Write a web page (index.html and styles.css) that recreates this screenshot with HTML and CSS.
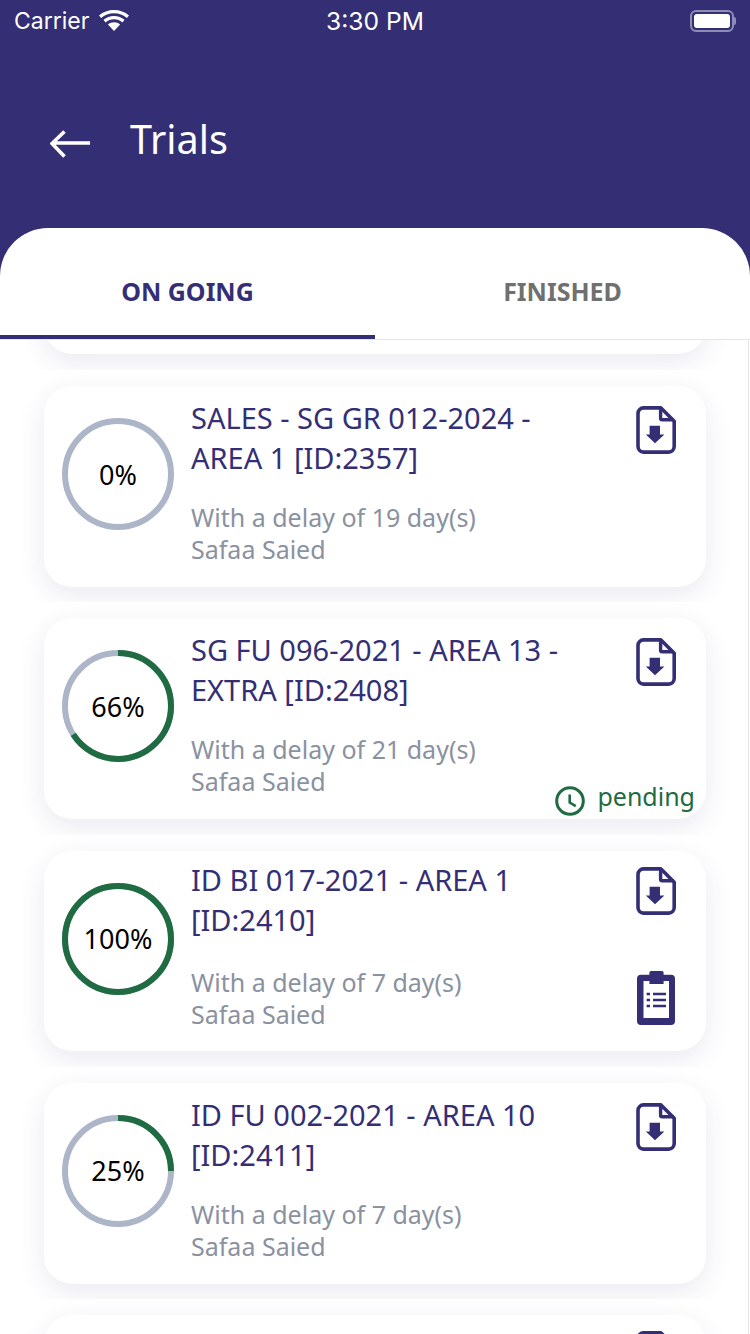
FILE: index.html
```html
<!DOCTYPE html>
<html lang="en">
<head>
<meta charset="utf-8">
<title>Trials</title>
<link rel="stylesheet" href="styles.css">
</head>
<body>
<svg class="defs" width="0" height="0" aria-hidden="true">
  <symbol id="doc" viewBox="0 0 40 48">
    <path d="M7.5 1.9H25L38.2 15.2V40.6A5.5 5.5 0 0 1 32.7 46.1H7.5A5.5 5.5 0 0 1 2 40.6V7.4A5.5 5.5 0 0 1 7.5 1.9Z" fill="none" stroke="#342f75" stroke-width="3.6" stroke-linejoin="round"/>
    <path d="M24.6 2V12.2A1.6 1.6 0 0 0 26.2 13.8H38" fill="none" stroke="#342f75" stroke-width="3.4"/>
    <path d="M13.6 19.8H24V28.6H28.4L19 37.2L9.8 28.6H13.6Z" fill="#342f75"/>
  </symbol>
  <symbol id="clip" viewBox="0 0 38 54">
    <path d="M14 0H25A1.6 1.6 0 0 1 26.6 1.6V3.7H34A4 4 0 0 1 38 7.7V50A4 4 0 0 1 34 54H4A4 4 0 0 1 0 50V7.7A4 4 0 0 1 4 3.7H12.4V1.6A1.6 1.6 0 0 1 14 0Z" fill="#342f75"/>
    <path d="M6.5 10H12.4V13H26.6V10H32V47H6.5Z" fill="#fff"/>
    <path d="M16 23H29M16 29H29M16 35H29" stroke="#342f75" stroke-width="2.6"/>
    <path d="M9.6 23H13M9.6 29H13M9.6 35H13" stroke="#342f75" stroke-width="2.6"/>
  </symbol>
</svg>
<main class="screen">
  <header class="appbar">
    <div class="status">
      <div class="status-left">
        <span>Carrier</span>
        <svg class="wifi" viewBox="0 0 30 21"><path d="M15 3.2C20 3.2 24.400 5 27.900 8.100L30 5.500C25.900 1.900 20.700 0 15 0S4.100 1.900 0 5.500L2.100 8.100C5.600 5 10 3.200 15 3.200Z" fill="#fff"/><path d="M15 9.300C18.200 9.300 21 10.400 23.400 12.400L25.500 9.800C22.600 7.400 19 6 15 6S7.400 7.400 4.500 9.800L6.600 12.400C9 10.400 11.800 9.300 15 9.300Z" fill="#fff"/><path d="M15 12.300C12.700 12.300 10.600 13.100 8.900 14.500L15 21L21.100 14.500C19.400 13.100 17.300 12.300 15 12.300Z" fill="#fff"/></svg>
      </div>
      <span class="status-time">3:30 PM</span>
      <div class="status-right">
        <span class="battery"><span class="battery-fill"></span></span><span class="battery-cap"></span>
      </div>
    </div>
    <div class="titlebar">
      <svg class="back" viewBox="0 0 40 28"><path d="M40 13H4.500M14.500 1.500L2 13.500L14.500 26.500" fill="none" stroke="#fff" stroke-width="3.600"/></svg>
      <h1 class="title">Trials</h1>
    </div>
  </header>

  <section class="panel">
    <nav class="tabs">
      <div class="tab tab-active">ON GOING</div>
      <div class="tab">FINISHED</div>
    </nav>
    <div class="list">
      <div class="row row-stub"><div class="card"></div></div>

      <article class="row">
        <div class="card">
          <svg class="ring" viewBox="0 0 112 112"><circle class="ring-track" cx="56" cy="56" r="53"/></svg>
          <div class="info">
            <h2 class="name">SALES - SG GR 012-2024 - AREA 1 [ID:2357]</h2>
            <p class="delay">With a delay of 19 day(s)</p>
            <p class="owner">Safaa Saied</p>
          </div>
          <div class="actions"><svg class="doc"><use href="#doc"/></svg></div>
          <span class="pct">0%</span>
        </div>
      </article>

      <article class="row">
        <div class="card">
          <svg class="ring" viewBox="0 0 112 112"><circle class="ring-track" cx="56" cy="56" r="53"/><circle class="ring-value" cx="56" cy="56" r="53" pathLength="100" stroke-dasharray="66 100"/></svg>
          <div class="info">
            <h2 class="name">SG FU 096-2021 - AREA 13 - EXTRA [ID:2408]</h2>
            <p class="delay">With a delay of 21 day(s)</p>
            <p class="owner">Safaa Saied</p>
          </div>
          <div class="actions"><svg class="doc"><use href="#doc"/></svg></div>
          <span class="pct">66%</span>
          <div class="badge">
            <svg class="clock" viewBox="0 0 30 30"><circle cx="15" cy="15" r="13.300" fill="none" stroke="#1f6b42" stroke-width="3"/><path d="M14.700 8.500V16.600L20.800 20.200" fill="none" stroke="#1f6b42" stroke-width="2.600"/></svg>
            <span class="badge-text">pending</span>
          </div>
        </div>
      </article>

      <article class="row">
        <div class="card">
          <svg class="ring" viewBox="0 0 112 112"><circle class="ring-track" cx="56" cy="56" r="53"/><circle class="ring-value" cx="56" cy="56" r="53" pathLength="100" stroke-dasharray="100 100"/></svg>
          <div class="info">
            <h2 class="name name-raised">ID BI 017-2021 - AREA 1 [ID:2410]</h2>
            <p class="delay">With a delay of 7 day(s)</p>
            <p class="owner">Safaa Saied</p>
          </div>
          <div class="actions actions-double"><svg class="doc"><use href="#doc"/></svg><svg class="clipboard"><use href="#clip"/></svg></div>
          <span class="pct">100%</span>
        </div>
      </article>

      <article class="row">
        <div class="card">
          <svg class="ring" viewBox="0 0 112 112"><circle class="ring-track" cx="56" cy="56" r="53"/><circle class="ring-value" cx="56" cy="56" r="53" pathLength="100" stroke-dasharray="25 100"/></svg>
          <div class="info">
            <h2 class="name">ID FU 002-2021 - AREA 10 [ID:2411]</h2>
            <p class="delay">With a delay of 7 day(s)</p>
            <p class="owner">Safaa Saied</p>
          </div>
          <div class="actions"><svg class="doc"><use href="#doc"/></svg></div>
          <span class="pct">25%</span>
        </div>
      </article>

      <article class="row">
        <div class="card">
          <div class="info"></div>
          <div class="actions actions-double"><svg class="doc"><use href="#doc"/></svg></div>
        </div>
      </article>
    </div>
  </section>
</main>
</body>
</html>
```

FILE: styles.css
```css
* { box-sizing: border-box; }
html, body { margin: 0; padding: 0; background: #fff; }
.defs { position: absolute; }
.screen {
  width: 750px;
  height: 1334px;
  overflow: hidden;
  display: flex;
  flex-direction: column;
  background: #342f75;
  font-family: "Noto Sans", sans-serif;
}
.appbar { height: 228px; flex: none; color: #fff; }
.status {
  height: 40px;
  padding: 1px 14px 0;
  display: grid;
  grid-template-columns: 1fr auto 1fr;
  align-items: center;
  font-family: Inter, sans-serif;
  font-size: 23px;
}
.status-time { font-size: 24.6px; }
.status-left { display: flex; align-items: center; gap: 10px; }
.wifi { width: 30px; height: 21px; }
.status-right { display: flex; justify-content: flex-end; align-items: center; }
.battery {
  width: 44px;
  height: 22px;
  padding: 2px;
  border: 2px solid #8f8cb5;
  border-radius: 6px;
  display: block;
}
.battery-fill { display: block; height: 100%; background: #fff; border-radius: 3px; }
.battery-cap { width: 2px; height: 8px; background: #8f8cb5; border-radius: 0 2px 2px 0; }
.titlebar { display: flex; align-items: center; gap: 40px; padding: 73px 0 0 50px; }
.back { width: 40px; height: 28px; flex: none; margin-top: 10px; }
.title { margin: 0; font-size: 39.6px; line-height: 52px; font-weight: 400; }

.panel {
  flex: 1;
  min-height: 0;
  display: flex;
  flex-direction: column;
  background: #fff;
  border-radius: 48px 48px 0 0;
  overflow: hidden;
}
.tabs {
  height: 112px;
  flex: none;
  display: grid;
  grid-template-columns: 1fr 1fr;
  border-bottom: 1px solid #e6e6e6;
}
.tab {
  display: flex;
  align-items: center;
  justify-content: center;
  padding-top: 14px;
  font-size: 25px;
  font-weight: 700;
  color: #707070;
}
.tab-active { color: #342f75; border-bottom: 4px solid #342f75; padding-top: 18px; }

.list {
  flex: 1;
  min-height: 0;
  overflow: hidden;
  border-right: 1px solid #e4e4e4;
  margin-right: 1px;
}
.row {
  height: 232.33px;
  padding-top: 16px;
  overflow: hidden;
}
.row-stub {
  height: 30px;
  padding-top: 0;
  display: flex;
  flex-direction: column;
  justify-content: flex-end;
}
.row-stub .card { flex: none; margin-bottom: 16px; }
.card {
  position: relative;
  width: 662px;
  height: 200.7px;
  margin-left: 44px;
  display: flex;
  background: #fff;
  border-radius: 28px;
  box-shadow: 0 8px 28px rgba(52, 47, 117, 0.10);
  color: #342f75;
}
.ring {
  width: 112px;
  height: 112px;
  flex: none;
  margin: 32px 0 0 18px;
}
.ring-track { fill: none; stroke: #adb5c8; stroke-width: 6; }
.ring-value {
  fill: none;
  stroke: #1f6b42;
  stroke-width: 6;
  transform: rotate(-90deg);
  transform-origin: center;
}
.pct {
  position: absolute;
  left: 18px;
  top: 32px;
  width: 112px;
  height: 112px;
  display: flex;
  align-items: center;
  justify-content: center;
  font-size: 27px;
  color: #000;
}
.info { flex: 1; min-width: 0; padding: 12px 30px 0 17px; }
.name { margin: 0 0 23px; font-size: 29px; line-height: 40px; font-weight: 400; color: #342f75; }
.name-raised { margin: -3px 0 26px; }
.delay, .owner { margin: 0; font-size: 25px; line-height: 32px; color: #8a919f; }
.actions {
  width: 70px;
  flex: none;
  padding-top: 20px;
  display: flex;
  flex-direction: column;
}
.actions-double { padding-top: 16px; gap: 56px; }
.doc { width: 40px; height: 48px; display: block; }
.clipboard { width: 38px; height: 54px; margin-left: 1px; display: block; }
.badge {
  position: absolute;
  right: 11px;
  bottom: -3px;
  display: flex;
  align-items: center;
  gap: 12px;
  font-size: 25px;
  line-height: 32px;
  color: #1f6b42;
}
.badge-text { margin-bottom: 10px; }
.clock { width: 30px; height: 30px; }
```
